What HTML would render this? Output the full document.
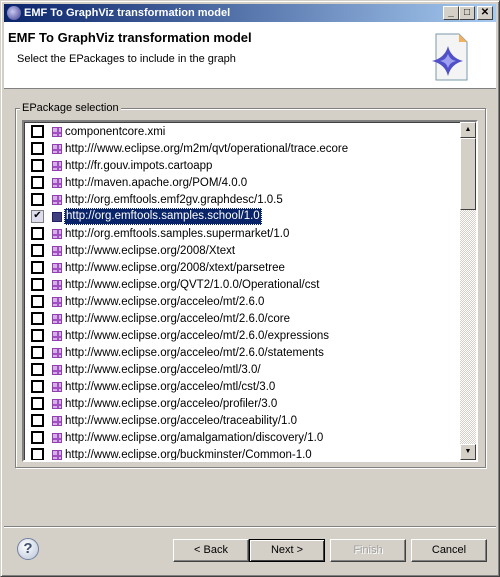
<!DOCTYPE html>
<html><head><style>
*{margin:0;padding:0;box-sizing:border-box}
body{width:500px;height:577px;background:#d4d0c8;font-family:"Liberation Sans",sans-serif;font-size:11px;position:relative;overflow:hidden;color:#000}
.abs{position:absolute}
.win{left:0;top:0;width:500px;height:577px;border:1px solid;border-color:#d4d0c8 #404040 #404040 #d4d0c8;box-shadow:inset 1px 1px #fff,inset -1px -1px #808080}
.title{left:4px;top:4px;width:492px;height:18px;background:linear-gradient(90deg,#0a246a,#a6caf0);color:#fff;font-weight:bold;font-size:11px;line-height:18px;padding-left:20px}
.tb{top:6px;width:16px;height:14px;background:#d4d0c8;border:1px solid;border-color:#fff #404040 #404040 #fff;font-size:10px;line-height:11px;text-align:center;color:#000;font-weight:bold}
.hdr{left:4px;top:22px;width:492px;height:67px;background:#fff;border-bottom:1px solid #808080}
.row{height:17px;line-height:17px;position:relative;white-space:nowrap}
.cb{position:absolute;left:7px;top:2px;width:13px;height:13px;border:2px solid #000;background:#fff}
.ic{position:absolute;left:28px;top:4px;width:10px;height:10px;background:
linear-gradient(#a050c0,#a050c0) 4px 0/2px 10px no-repeat,linear-gradient(#a050c0,#a050c0) 0 4px/10px 2px no-repeat,#d8b0e8;border:1px solid #9040b0}
.tx{position:absolute;left:40px;top:1px;padding:0 1px;font-size:11.5px}
.btn{top:539px;width:76px;height:23px;border:1px solid;border-color:#fff #404040 #404040 #fff;box-shadow:inset -1px -1px #808080;text-align:center;line-height:21px}
</style></head><body>
<div class="abs win"></div>
<div class="abs title">EMF To GraphViz transformation model
<div class="abs" style="left:3px;top:2px;width:14px;height:14px;border-radius:50%;background:radial-gradient(circle at 40% 40%,#c8c8f0,#3a3a90)"></div></div>
<div class="abs tb" style="left:443px">_</div>
<div class="abs tb" style="left:459px">□</div>
<div class="abs tb" style="left:477px">✕</div>
<div class="abs hdr">
<div class="abs" style="left:4px;top:8px;font-weight:bold;font-size:13px">EMF To GraphViz transformation model</div>
<div class="abs" style="left:13px;top:31px">Select the EPackages to include in the graph</div>
<svg class="abs" style="left:422px;top:10px" width="48" height="50"><path d="M10 2h23l8 8v38H10z" fill="#f4f4f4" stroke="#7a9aaa"/><path d="M33 2v8h8z" fill="#f0b060"/><path d="M22 14 Q25 26 37 29 Q25 32 22 44 Q19 32 6 29 Q19 26 22 14z" fill="#5050c8"/><path d="M22 22 Q24 28 30 29 Q24 30 22 36 Q20 30 14 29 Q20 28 22 22z" fill="#a0a0f0"/></svg>
</div>
<div class="abs" style="left:15px;top:108px;width:471px;height:360px;border:1px solid #808080;box-shadow:1px 1px #fff,inset 1px 1px #fff"></div>
<div class="abs" style="left:20px;top:102px;background:#d4d0c8;padding:0 2px">EPackage selection</div>
<div class="abs" style="left:22px;top:120px;width:456px;height:342px;border:2px solid;border-color:#808080 #fff #fff #808080;box-shadow:inset 1px 1px #404040;background:#fff;overflow:hidden">
<div style="position:absolute;left:0;top:1px;width:436px">
<div class="row"><span class="cb"></span><span class="ic"></span><span class="tx">componentcore.xmi</span></div>
<div class="row"><span class="cb"></span><span class="ic"></span><span class="tx">http:///www.eclipse.org/m2m/qvt/operational/trace.ecore</span></div>
<div class="row"><span class="cb"></span><span class="ic"></span><span class="tx">http://fr.gouv.impots.cartoapp</span></div>
<div class="row"><span class="cb"></span><span class="ic"></span><span class="tx">http://maven.apache.org/POM/4.0.0</span></div>
<div class="row"><span class="cb"></span><span class="ic"></span><span class="tx">http://org.emftools.emf2gv.graphdesc/1.0.5</span></div>
<div class="row"><span class="cb" style="border-width:1px;border-color:#808080;background:#dde;font-size:10px;line-height:10px;text-align:center">✔</span><span class="ic" style="background:#404080;border-color:#202060"></span><span class="tx" style="background:#0a246a;color:#fff;border:1px dotted #fff;line-height:15px;top:0">http://org.emftools.samples.school/1.0</span></div>
<div class="row"><span class="cb"></span><span class="ic"></span><span class="tx">http://org.emftools.samples.supermarket/1.0</span></div>
<div class="row"><span class="cb"></span><span class="ic"></span><span class="tx">http://www.eclipse.org/2008/Xtext</span></div>
<div class="row"><span class="cb"></span><span class="ic"></span><span class="tx">http://www.eclipse.org/2008/xtext/parsetree</span></div>
<div class="row"><span class="cb"></span><span class="ic"></span><span class="tx">http://www.eclipse.org/QVT2/1.0.0/Operational/cst</span></div>
<div class="row"><span class="cb"></span><span class="ic"></span><span class="tx">http://www.eclipse.org/acceleo/mt/2.6.0</span></div>
<div class="row"><span class="cb"></span><span class="ic"></span><span class="tx">http://www.eclipse.org/acceleo/mt/2.6.0/core</span></div>
<div class="row"><span class="cb"></span><span class="ic"></span><span class="tx">http://www.eclipse.org/acceleo/mt/2.6.0/expressions</span></div>
<div class="row"><span class="cb"></span><span class="ic"></span><span class="tx">http://www.eclipse.org/acceleo/mt/2.6.0/statements</span></div>
<div class="row"><span class="cb"></span><span class="ic"></span><span class="tx">http://www.eclipse.org/acceleo/mtl/3.0/</span></div>
<div class="row"><span class="cb"></span><span class="ic"></span><span class="tx">http://www.eclipse.org/acceleo/mtl/cst/3.0</span></div>
<div class="row"><span class="cb"></span><span class="ic"></span><span class="tx">http://www.eclipse.org/acceleo/profiler/3.0</span></div>
<div class="row"><span class="cb"></span><span class="ic"></span><span class="tx">http://www.eclipse.org/acceleo/traceability/1.0</span></div>
<div class="row"><span class="cb"></span><span class="ic"></span><span class="tx">http://www.eclipse.org/amalgamation/discovery/1.0</span></div>
<div class="row"><span class="cb"></span><span class="ic"></span><span class="tx">http://www.eclipse.org/buckminster/Common-1.0</span></div>
</div>
<div class="abs" style="left:436px;top:0;width:16px;height:338px;background:repeating-conic-gradient(#d4d0c8 0 25%,#fff 0 50%) 0 0/2px 2px"></div>
<div class="abs" style="left:436px;top:0;width:16px;height:16px;background:#d4d0c8;border:1px solid;border-color:#fff #404040 #404040 #fff;font-size:7px;text-align:center;line-height:14px">▲</div>
<div class="abs" style="left:436px;top:16px;width:16px;height:72px;background:#d4d0c8;border:1px solid;border-color:#fff #404040 #404040 #fff"></div>
<div class="abs" style="left:436px;top:322px;width:16px;height:16px;background:#d4d0c8;border:1px solid;border-color:#fff #404040 #404040 #fff;font-size:7px;text-align:center;line-height:14px">▼</div>
</div>
<div class="abs" style="left:4px;top:526px;width:492px;height:2px;border-top:1px solid #808080;border-bottom:1px solid #fff"></div>
<div class="abs" style="left:17px;top:538px;width:22px;height:22px;border-radius:50%;background:radial-gradient(circle at 40% 35%,#fff,#b8c4d8);border:1px solid #7080a0;text-align:center;line-height:20px;font-weight:bold;font-size:15px;color:#405070">?</div>
<div class="abs btn" style="left:173px">&lt; Back</div>
<div class="abs btn" style="left:249px;border:1px solid #000;box-shadow:inset 1px 1px #fff,inset -1px -1px #404040">Next &gt;</div>
<div class="abs btn" style="left:330px;color:#a0a0a0;text-shadow:1px 1px #fff">Finish</div>
<div class="abs btn" style="left:411px">Cancel</div>
</body></html>
